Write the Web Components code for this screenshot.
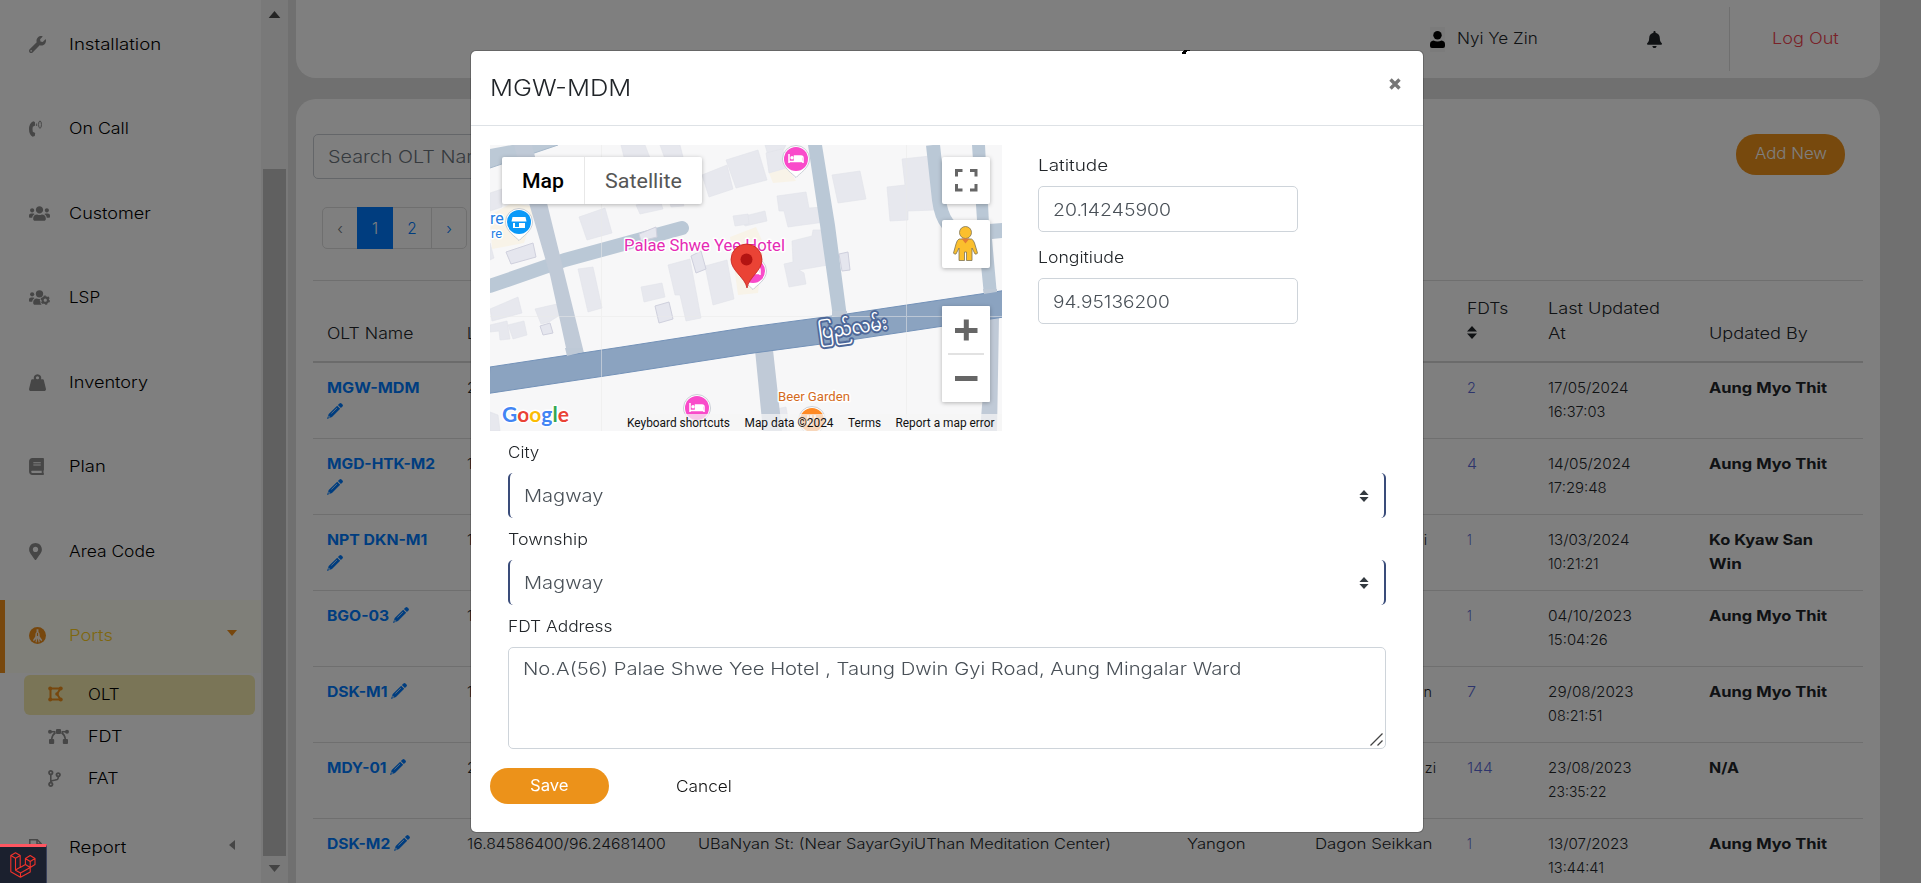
<!DOCTYPE html>
<html lang="en">
<head>
<meta charset="utf-8">
<title>OLT</title>
<style>
body{margin:0;height:883px;overflow:hidden;background:#e1e1e1;color:#212529;font-family:Inter,"Noto Sans",sans-serif;font-size:15.4px;font-weight:300}
</style>
</head>
<body>
<olt-page></olt-page>
<script>
const icons={
wrench:['0 0 512 512','<path d="M507.73 109.1c-2.24-9.03-13.54-12.09-20.12-5.51l-74.36 74.36-67.88-11.31-11.31-67.88 74.36-74.36c6.62-6.62 3.43-17.9-5.66-20.16-47.38-11.74-99.55.91-136.58 37.93-39.64 39.64-50.55 97.1-34.05 147.2L18.74 402.76c-24.99 24.99-24.99 65.51 0 90.5 24.99 24.99 65.51 24.99 90.5 0l213.21-213.21c50.12 16.71 107.47 5.68 147.37-34.22 37.07-37.07 49.7-89.32 37.91-136.73zM64 472c-13.25 0-24-10.75-24-24 0-13.26 10.75-24 24-24s24 10.74 24 24c0 13.25-10.75 24-24 24z"/>'],
call:['0 0 13 17','<path d="M4.2 1.2Q0 3.500 0 9t3.600 7.700l2.200-.7.400-3-2.400-1.300Q3.200 9 3.800 6.700l2.400-1.200-.3-3.600z"/><g fill="none" stroke="currentColor"><path d="M7.700 3.500v2.500"/><ellipse cx="11" cy="4.600" rx="1.400" ry="3.700"/></g>'],
users:['0 0 640 512','<path d="M96 224c35.3 0 64-28.7 64-64s-28.7-64-64-64-64 28.7-64 64 28.7 64 64 64zm448 0c35.3 0 64-28.7 64-64s-28.7-64-64-64-64 28.7-64 64 28.7 64 64 64zm32 32h-64c-17.6 0-33.5 7.1-45.1 18.6 40.3 22.1 68.9 62 75.1 109.4h66c17.7 0 32-14.3 32-32v-32c0-35.3-28.7-64-64-64zm-256 0c61.9 0 112-50.1 112-112S381.9 32 320 32 208 82.1 208 144s50.1 112 112 112zm76.8 32h-8.3c-20.8 10-43.9 16-68.5 16s-47.6-6-68.5-16h-8.3C179.6 288 128 339.6 128 403.2V432c0 26.5 21.5 48 48 48h288c26.5 0 48-21.5 48-48v-28.8c0-63.6-51.6-115.2-115.2-115.2zm-223.7-13.4C161.5 263.1 145.600 256 128 256H64c-35.3 0-64 28.7-64 64v32c0 17.7 14.3 32 32 32h65.900c6.3-47.4 34.9-87.3 75.2-109.400z"/>'],
userscog:['0 0 640 512','<circle cx="96" cy="160" r="64"/><circle cx="320" cy="144" r="112"/><path d="M173 274.600C161.500 263 145.600 256 128 256H64c-35 0-64 29-64 64v32c0 18 14 32 32 32h66c6-47 35-87 75-109.400zM232 288c-60 4-104 54-104 115v29c0 26 21 48 48 48h215c-30-16-50-60-40-100-30-30-30-60 0-86-38 14-80 10-119-6z"/><circle cx="496" cy="336" r="82" fill="none" stroke="currentColor" stroke-width="66"/><circle cx="496" cy="336" r="122" fill="none" stroke="currentColor" stroke-width="44" stroke-dasharray="64 63.750"/>'],
weight:['0 0 512 512','<path fill-rule="evenodd" d="M510 446L445 184c-3-14-15-24-29-24h-56a112 112 0 1 0-208 0H96c-14 0-26 10-29 24L2 446c-8 33 17 66 52 66h404c35 0 60-33 52-66zM256 160a48 48 0 1 1 0-96 48 48 0 0 1 0 96z"/>'],
book:['0 0 448 512','<path d="M448 360V24c0-13.300-10.700-24-24-24H96C43 0 0 43 0 96v320c0 53 43 96 96 96h328c13.300 0 24-10.700 24-24v-16c0-7.500-3.500-14.300-8.900-18.700-4.200-15.400-4.200-59.300 0-74.700 5.400-4.300 8.900-11.100 8.900-18.600zM128 134c0-3.300 2.700-6 6-6h212c3.300 0 6 2.700 6 6v20c0 3.300-2.700 6-6 6H134c-3.300 0-6-2.700-6-6v-20zm0 64c0-3.300 2.700-6 6-6h212c3.300 0 6 2.700 6 6v20c0 3.300-2.700 6-6 6H134c-3.300 0-6-2.700-6-6v-20zm253.400 250H96c-17.700 0-32-14.300-32-32 0-17.600 14.400-32 32-32h285.400c-1.900 17.100-1.900 46.900 0 64z"/>'],
pin:['0 0 384 512','<path d="M172.268 501.670C26.970 291.031 0 269.413 0 192 0 85.961 85.961 0 192 0s192 85.961 192 192c0 77.413-26.970 99.031-172.268 309.670-9.535 13.774-29.930 13.773-39.464 0zM192 272c44.183 0 80-35.817 80-80s-35.817-80-80-80-80 35.817-80 80 35.817 80 80 80z"/>'],
ports:['0 0 16 16','<circle cx="8" cy="8" r="8"/><path d="M7.100 2.200h1.800v2.600l1 1.200.2 3 2.300 3.200-.6 1.200-2.300-2.200.6 3-1 .5-1-4.200-1 4.200-1-.5.6-3-2.300 2.200-.6-1.200L5.900 9l.2-3 1-1.200z" fill="#fff" fill-opacity=".85"/><path d="M8 5.500v3" stroke="currentColor" stroke-width="1.100"/>'],
polygon:['0 0 15 16','<g fill="none" stroke="currentColor" stroke-width="2"><path d="M2.500 2.600h10L9 8l3.500 5.500h-10z"/></g><circle cx="2.200" cy="2.500" r="2"/><circle cx="12.700" cy="2.500" r="2"/><circle cx="9" cy="8" r="1.800"/><circle cx="2.200" cy="13.500" r="2"/><circle cx="12.700" cy="13.500" r="2"/>'],
bezier:['0 0 21 17','<circle cx="2" cy="3.700" r="2"/><circle cx="19" cy="3.700" r="2"/><rect x="8" y="1" width="5" height="5" rx="1"/><rect x="1" y="11" width="5.200" height="5" rx="1"/><rect x="14.800" y="11" width="5.200" height="5" rx="1"/><g fill="none" stroke="currentColor" stroke-width="1.600"><path d="M3 3.700h4.500M13.500 3.700h5M7.500 4.500Q4.200 7 3.700 11M13.500 4.500Q16.800 7 17.300 11"/></g>'],
branch:['0 0 384 512','<path d="M384 144c0-44.200-35.800-80-80-80s-80 35.800-80 80c0 36.400 24.300 67.100 57.500 76.800-.6 16.100-4.200 28.500-11 36.900-15.400 19.200-49.300 22.400-85.200 25.700-28.200 2.600-57.400 5.400-81.300 16.900v-144c32.500-10.200 56-40.500 56-76.300 0-44.200-35.800-80-80-80S0 35.800 0 80c0 35.800 23.500 66.100 56 76.300v199.300C23.500 365.900 0 396.200 0 432c0 44.200 35.800 80 80 80s80-35.800 80-80c0-34-21.200-63.100-51.200-74.600 3.100-5.200 7.800-9.800 14.900-13.400 16.200-8.200 40.400-10.400 66.100-12.800 42.200-3.900 90-8.400 118.200-43.400 14-17.400 21.100-39.800 21.600-67.900 31.600-10.800 54.400-40.700 54.400-75.900zM80 56a24 24 0 1 1 0 48 24 24 0 0 1 0-48zm0 400a24 24 0 1 1 0-48 24 24 0 0 1 0 48zm224-336a24 24 0 1 1 0 48 24 24 0 0 1 0-48z"/>'],
file:['0 0 13 17','<path fill="none" stroke="currentColor" stroke-width="1.500" d="M.8.8h7.500l4 4v11.400H.8zM8 1v4h4"/>'],
bell:['0 0 448 512','<path d="M224 512c35.320 0 63.970-28.650 63.970-64H160.030c0 35.350 28.650 64 63.970 64zm215.390-149.710c-19.320-20.760-55.470-51.990-55.470-154.290 0-77.700-54.480-139.900-127.940-155.160V32c0-17.670-14.320-32-31.980-32s-31.980 14.330-31.980 32v20.840C118.560 68.100 64.080 130.300 64.080 208c0 102.300-36.150 133.530-55.470 154.290-6 6.450-8.660 14.160-8.610 21.710.11 16.400 12.980 32 32.100 32h383.800c19.120 0 32-15.600 32.100-32 .05-7.550-2.610-15.270-8.610-21.710z"/>'],
user:['0 0 15 17','<circle cx="7.500" cy="4.200" r="4.200"/><path d="M3.500 9.600Q7.500 11.500 11.500 9.600 15 10 15 13.500V15q0 2-2 2H2q-2 0-2-2v-1.500Q0 10 3.500 9.600z"/>'],
pencil:['0 0 16 16','<path d="M10.900 2.100L12.500.500q1-.9 2 0l1 1q.9 1 0 2l-1.600 1.600zM10.200 2.800l3 3L5 14 0 16l1.700-5.100z"/><path d="M4.400 10.500l5.500-5.400" stroke="#fff" stroke-width=".7" fill="none"/><path d="M1.700 12.600l1.700 1.700-1.500.6-.8-.8z" fill="#fff" opacity=".7"/>'],
sort:['0 0 10 13','<path d="M0 5.500L5 0l5 5.500zM0 7.500h10L5 13z"/>'],
down:['0 0 10 6','<path d="M0 0h10L5 6z"/>'],up:['0 0 10 6','<path d="M0 6h10L5 0z"/>'],left:['0 0 6 10','<path d="M6 0v10L0 5z"/>']};

class UiIcon extends HTMLElement{
  connectedCallback(){
    const r=this.attachShadow({mode:'open'}),[box,body]=icons[this.getAttribute('name')];
    r.innerHTML=`<style>:host{display:inline-block;flex:none;width:${this.getAttribute('w')}px;height:${this.getAttribute('h')}px;line-height:0}svg{display:block;width:100%;height:100%}</style><svg viewBox="${box}" fill="currentColor">${body}</svg>`;
  }
}
/* A label that occupies an exact measure, widening its letters to fill it. */
class FitText extends HTMLElement{
  connectedCallback(){
    const r=this.attachShadow({mode:'open'}),w=+this.getAttribute('w');
    r.innerHTML=`<style>:host{display:inline-block;flex:none;width:${w}px;white-space:nowrap}span{display:inline-block;transform-origin:0 50%}</style><span><slot></slot></span>`;
    const s=r.querySelector('span');
    s.style.transform=`scaleX(${w/s.offsetWidth})`;
  }
}
const t=(s,w)=>`<fit-text w="${w}">${s}</fit-text>`;
const ic=(n,w,h)=>`<ui-icon name="${n}" w="${w}" h="${h}"></ui-icon>`;

class SideItem extends HTMLElement{
  connectedCallback(){
    const a=n=>this.getAttribute(n);
    this.attachShadow({mode:'open'}).innerHTML=`<style>
    :host{display:block;color:#000}
    .r{display:flex;align-items:center;height:73px;margin-bottom:11.570px;box-sizing:border-box;padding:0 0 1px 29px}
    .i{width:40px;display:flex;color:#8d8d8d}
    .c{margin-left:auto;padding-right:26px;display:flex;color:#8d8d8d;position:relative;top:-3px}
    :host([kind=open]) .r{background:#fffff3;border-left:5px solid #f0911a;padding-left:24px;margin-bottom:2px;color:#ffcf1f}
    :host([kind=open]) .c{padding-right:24px}
    :host([kind=open]) .i,:host([kind=open]) .c,:host([kind=sel]) .i{color:#ee8f1b}
    :host([kind=sub]) .r,:host([kind=sel]) .r{height:40px;margin:0 6px 2px 24px;padding-left:24px;border-radius:6px}
    :host([kind=sel]) .r{background:#f4ebae}
    </style><div class="r"><span class="i">${ic(a('icon'),a('iw'),a('ih')||17)}</span><slot></slot><span class="c">${a('caret')?ic(a('caret'),a('caret')=='down'?10:6,a('caret')=='down'?6:10):''}</span></div>`;
  }
}
class SideNav extends HTMLElement{
  connectedCallback(){
    const it=(n,w,i,iw,k='',c='',ih=17)=>`<side-item icon="${i}" iw="${iw}" ih="${ih}" kind="${k}" ${c&&`caret="${c}"`}>${t(n,w)}</side-item>`;
    this.attachShadow({mode:'open'}).innerHTML=`<style>
    :host{display:flex;width:288px;height:883px;background:#fff}
    nav{width:261px;padding-top:8px;box-sizing:border-box;height:883px;overflow:hidden}
    .g{height:11px}
    .sb{width:27px;height:883px;background:#f3f3f3;display:flex;flex-direction:column;align-items:center;color:#4a4a4a;box-sizing:border-box;padding:11px 0 11px}
    .th{flex:none;width:23px;height:687px;margin:151px 0 9px;background:#c0c0c0}
    .dn{color:#868686;display:flex}
    </style><nav>${it('Installation',92,'wrench',17)}${it('On Call',60,'call',13)}${it('Customer',82,'users',21)}${it('LSP',31,'userscog',21)}${it('Inventory',79,'weight',17)}${it('Plan',37,'book',15)}${it('Area Code',86,'pin',13)}${it('Ports',44,'ports',17,'open','down')}${it('OLT',32,'polygon',15,'sel','',16)}${it('FDT',34,'bezier',21,'sub')}${it('FAT',31,'branch',13,'sub')}<div class="g"></div>${it('Report',57,'file',13,'','left')}</nav>
    <div class="sb">${ic('up',13,7)}<div class="th"></div><span class="dn">${ic('down',13,7)}</span></div>`;
  }
}
class TopBar extends HTMLElement{
  connectedCallback(){
    this.attachShadow({mode:'open'}).innerHTML=`<style>
    :host{display:flex;height:78px;background:#fff;border-radius:0 0 20px 20px;box-sizing:border-box;justify-content:flex-end;align-items:center}
    fit-text{margin-top:-2px}
    .u{background:#f6f6f6;width:15px;height:25px;display:flex;align-items:center;color:#000;margin:0 12px 0 0}
    .bell{margin:0 67px 0 109px;display:flex}
    .out{border-left:1px solid #dedede;height:64px;display:flex;align-items:center;padding:0 41px 0 42px;color:#f24450}
    </style><span class="u">${ic('user',15,17)}</span>${t('Nyi Ye Zin',81)}<span class="bell">${ic('bell',15,17)}</span><span class="out">${t('Log Out',67)}</span>`;
  }
}
class OltTable extends HTMLElement{
  connectedCallback(){
    const rows=[
    [['MGW-MDM',92,1],'2','','','','',['2',9],['17/05/2024',81,'16:37:03',57],['Aung Myo Thit',118]],
    [['MGD-HTK-M2',108,1],'1','','','','',['4',10],['14/05/2024',83,'17:29:48',59],['Aung Myo Thit',118]],
    [['NPT DKN-M1',100,1],'1','','','i',5,['1',5],['13/03/2024',81,'10:21:21',51],['Ko Kyaw San',104,'Win',33]],
    [['BGO-03',62],'1','','','','',['1',5],['04/10/2023',84,'15:04:26',60],['Aung Myo Thit',118]],
    [['DSK-M1',60],'1','','','n',0,['7',9],['29/08/2023',85,'08:21:51',55],['Aung Myo Thit',118]],
    [['MDY-01',59],'2','','','zi',-4,['144',26],['23/08/2023',84,'23:35:22',59],['N/A',30]],
    [['DSK-M2',63],t('16.84586400/96.24681400',199),t('UBaNyan St: (Near SayarGyiUThan Meditation Center)',413),t('Yangon',59),t('Dagon Seikkan',117),null,['1',5],['13/07/2023',80,'13:44:41',56],['Aung Myo Thit',118]]];
    const two=a=>t(a[0],a[1])+(a[2]?'<br>'+t(a[2],a[3]):'');
    this.attachShadow({mode:'open'}).innerHTML=`<style>
    :host{display:block;margin-top:31px;border-top:1px solid #dedede}
    .r{display:grid;grid-template-columns:140px 231px 489px 128px 152px 81px 161px 168px;height:76px;box-sizing:border-box;border-bottom:1px solid #dedede;padding:13px 0 0 14px;font-size:14.400px;line-height:24px}
    .h{height:81.500px;border-bottom:2px solid #d6d6d6;line-height:25px;font-size:15.400px;align-items:end;padding:0 0 15px 14px}
    .r>div{white-space:nowrap}
    .n{color:#007bff;font-weight:700;line-height:24px}
    .n ui-icon{vertical-align:-2px;margin-left:4px}
    .n br+ui-icon{margin-left:0}
    .f{color:#5c6bd8}.b{font-weight:700}
    .cut{text-align:right}
    </style><div class="r h"><div>${t('OLT Name',87)}</div><div>L</div><div></div><div></div><div></div><div>${t('FDTs',41)}<br>${ic('sort',10,13)}</div><div>${t('Last Updated',112)}<br>${t('At',18)}</div><div>${t('Updated By',99)}</div></div>`+
    rows.map(r=>`<div class="r"><div class="n">${t(r[0][0],r[0][1])}${r[0][2]?'<br>':''}${ic('pencil',16,16)}</div><div>${r[1]}</div><div>${r[2]}</div><div>${r[3]}</div><div ${r[5]!==null?`class="cut" style="padding-right:${35+(+r[5]||0)}px"`:''}>${r[4]}</div><div class="f">${two(r[6])}</div><div>${two(r[7])}</div><div class="b">${two(r[8])}</div></div>`).join('');
  }
}
class ListCard extends HTMLElement{
  connectedCallback(){
    this.attachShadow({mode:'open'}).innerHTML=`<style>
    :host{display:block;margin-top:21px;height:800px;background:#fff;border-radius:20px 20px 0 0;padding:35px 17px 0;box-sizing:border-box}
    .t{display:flex;justify-content:space-between;padding-right:18px}
    .s{width:400px;height:45px;border:1px solid #c9cdd2;border-radius:5px;box-sizing:border-box;padding-left:14px;display:flex;align-items:center;color:#6c757d;font-size:17.300px}
    .add{width:109px;height:41px;border-radius:20px;background:#ee921b;color:#fff;display:flex;align-items:center;justify-content:center;padding-bottom:2px;box-sizing:border-box}
    .p{display:inline-flex;height:42px;box-sizing:border-box;border:1px solid #dedede;border-radius:5px;margin:28px 0 0 9px;color:#007bff}
    .p span{display:flex;align-items:center;justify-content:center;width:34px}
    .p .a{background:#007bff;color:#fff;width:36px;margin:-1px 0}
    .p .n{width:39px;border-right:1px solid #dedede;box-sizing:border-box}
    </style><div class="t"><div class="s">${t('Search OLT Name',167)}</div><div class="add">${t('Add New',72)}</div></div>
    <div class="p"><span style="color:#6c757d">‹</span><span class="a">1</span><span class="n">2</span><span>›</span></div><olt-table></olt-table>`;
  }
}

class SiteMap extends HTMLElement{
  connectedCallback(){
    const b=(...p)=>p.map(q=>`<polygon points="${q}"/>`).join('');
    const poi=(x,y,c,g)=>`<g transform="translate(${x} ${y})"><path d="M0 18.500C-3 15-13.500 9-13.500 0a13.500 13.500 0 0 1 27 0C13.500 9 3 15 0 18.500z" fill="#fff" stroke="#b5bcc6" stroke-width=".7"/><circle r="12" fill="${c}"/>${g}</g>`;
    const bed='<path d="M-7-5v9M-7 2.500H7V4M-1.500 2V-3H5q2 0 2 2v3" fill="none" stroke="#fff" stroke-width="1.500"/><rect x="-1" y="-3" width="7" height="5" fill="#fff"/><circle cx="-4" cy="-1.300" r="1.700" fill="#fff"/>';
    this.attachShadow({mode:'open'}).innerHTML=`<style>
    :host{display:block;width:512px;height:286px;flex:none;overflow:hidden}
    svg{display:block;font-family:Roboto,"Noto Sans Myanmar",sans-serif;font-weight:400}
    .k rect{fill:#fff;filter:drop-shadow(0 1px 2px rgba(0,0,0,.28))}
    .halo{paint-order:stroke;stroke:#fff;stroke-width:3px;stroke-linejoin:round}
    </style><svg width="512" height="286" viewBox="0 0 512 286">
    <rect width="512" height="286" fill="#f7f7f8"/>
    <g fill="#f8f3e8">${b('0,70 22,58 46,62 34,98 2,104','279,28 298,23 306,36 283,38','240,92 266,82 274,100 268,148 248,150')}</g>
    <g fill="#e7e8ee" stroke="#e1e2ea" stroke-width=".6">
    ${b('131,0 155,0 165,26 138,28','170,0 190,0 196,24 180,28','89,72 115,63 122,88 97,95','212,30 237,20 243,44 219,52','236,15 268,5 277,35 246,43','275,0 296,0 290,12 279,14','276,8 292,4 300,22 279,28','342,30 370,26 376,54 348,58','397,42 415,40 412,14 440,11 445,65 418,66 418,75 400,76','287,51 316,47 319,63 333,62 335,77 298,82 294,66 289,66','251,72 275,66 277,76 255,81','302,96 322,91 323,85 332,85 338,120 309,125 314,128 316,139 299,142 294,119 303,117','178,120 200,114 211,173 196,176 190,150 185,150','215,121 237,115 244,154 223,160','151,142 172,138 175,152 154,157','88,124 103,122 112,163 98,167','0,164 28,152 32,168 2,176','0,180 17,176 20,194 10,195 9,186 0,187','18,180 34,176 37,190 23,194','45,164 58,161 67,159 70,170 59,177 51,179','0,48 12,44 12,62 0,66','146,60 170,55 173,64 150,69','180,58 192,55 194,61 181,62','243,71 258,69 259,79 245,81','0,98 4,113 0,115','280,265 296,262 300,286 283,286','0,267 8,270 10,286 0,286')}
    </g>
    <path d="M0 141L75 115L192 83" fill="none" stroke="#bac8d6" stroke-width="14" stroke-linecap="round"/>
    <g fill="#e5e6ee" stroke="#cfd0dd">${b('16,107 43,98 46,112 21,119','201,111 211,106 216,124 206,128','149,89 166,82 167,92 151,96','165,161 179,157 183,174 169,178','50,181 60,178 63,188 53,190','349,109 358,107 360,125 352,126')}</g>
    <path d="M0 4L22 0H68L0 23z" fill="#bcc9d6"/><path d="M0 23L68 0" stroke="#a6b8ca" fill="none"/>
    <path d="M24 0H42L57 58L94 208L78 212L60 130L39 58z" fill="#c0cad7"/>
    <path d="M318 0H332L345 80L357 172H343L330 80z" fill="#bac8d6"/>
    <path d="M443 0L449 55Q453 86 475 88" fill="none" stroke="#bac8d6" stroke-width="14"/><path d="M482 0H495L499 79L512 78V93L502 94L507 150H494L488 90z" fill="#bac8d6"/>
    <path d="M265 205H283L292 286H273zM499 172H509L507 286H490z" fill="#c0cad7"/>
    <path d="M0 222Q130 202.500 260 182L350 170L514 145.500V172L350 196.500L260 208.500Q130 229 -2 248.500z" fill="#8ba3c0" stroke="#7492b8"/>
    <path d="M77 211L93 207L92 203H75zM342 172L357 170V166H342zM494 149L507 147V144H493z" fill="#bec9d6"/>
    <g stroke="#fff" opacity=".3"><path d="M111.500 0V286M416.500 0V286M0 171.500H512"/></g>
    <g opacity=".3" stroke="#dcdcdc"><path d="M111.500 0V286M416.500 0V286M0 171.500H512"/></g>
    <text transform="translate(329 194) rotate(-8)" font-size="19" textLength="70" lengthAdjust="spacingAndGlyphs" fill="#fff" style="paint-order:stroke;stroke:#4d6798;stroke-width:4px;stroke-linejoin:round">ပြည်လမ်း</text>
    ${poi(29,77,'#0a99f8','<path d="M-6.500-5h13l1 4.500h-15zM-6 1h2v4h4V1h6v5H-6z" fill="#fff"/>')}
    ${poi(306,14,'#f94bca',bed)}${poi(207,263,'#f94bca',bed)}${poi(263,126,'#f94bca',bed)}${poi(322,275,'#ff8a24','<path d="M-4-5v10M-1-5v10M3-5v10" stroke="#fff" stroke-width="1.500"/>')}
    <g class="halo"><text x="0" y="78.500" font-size="16" fill="#257fe5">re</text><text x="1" y="92.500" font-size="13" fill="#257fe5">re</text>
    <text x="134" y="105.500" font-size="16.500" fill="#e52bb4" textLength="161" lengthAdjust="spacingAndGlyphs">Palae Shwe Yee Hotel</text>
    <text x="288" y="255.500" font-size="13" fill="#d46b1d" textLength="72" lengthAdjust="spacingAndGlyphs">Beer Garden</text></g>
    <path d="M257 143C255 132 241 126 241 114.500a15.500 15.500 0 0 1 31 0C272 126 259 132 257 143z" fill="#ea4335" stroke="#c5221f" stroke-width=".8"/><circle cx="256.500" cy="114.500" r="6" fill="#b31412"/>
    <rect x="135" y="269" width="377" height="17" fill="#f5f5f5" opacity=".72"/>
    <g font-size="12" fill="#111"><text x="137" y="281.500" textLength="103" lengthAdjust="spacingAndGlyphs">Keyboard shortcuts</text><text x="254.500" y="281.500" textLength="89" lengthAdjust="spacingAndGlyphs">Map data ©2024</text><text x="358" y="281.500" textLength="33" lengthAdjust="spacingAndGlyphs">Terms</text><text x="405.500" y="281.500" textLength="99" lengthAdjust="spacingAndGlyphs">Report a map error</text></g>
    <text class="halo" x="12" y="277" font-family="Lato" font-weight="700" font-size="21.500" textLength="67" lengthAdjust="spacingAndGlyphs"><tspan fill="#4285f4">G</tspan><tspan fill="#ea4335">o</tspan><tspan fill="#fbbc04">o</tspan><tspan fill="#4285f4">g</tspan><tspan fill="#34a853">l</tspan><tspan fill="#ea4335">e</tspan></text>
    <g class="k"><rect x="12" y="12" width="200" height="47" rx="2"/><rect x="452" y="12" width="48" height="47" rx="2"/><rect x="452" y="75" width="48" height="48" rx="2"/><rect x="452" y="161" width="48" height="96" rx="1"/></g>
    <path d="M94.500 12v47" stroke="#e8e8e8"/><g font-size="21"><text x="32" y="43" font-weight="500" textLength="42" lengthAdjust="spacingAndGlyphs">Map</text><text x="115" y="43" fill="#565656" textLength="77" lengthAdjust="spacingAndGlyphs">Satellite</text></g>
    <g fill="none" stroke="#666" stroke-width="3"><path d="M466.500 31.500v-6h6M480 25.500h6v6M486 39v6h-6M472.500 45h-6v-6"/><path stroke-width="5" d="M465 185.500h22.500M476.300 174.500v21M465 233.500h22.500"/></g><path d="M458 209h36" stroke="#e2e2e2" stroke-width="2"/>
    <g fill="#fbbf2d" stroke="#7d7455" stroke-width=".8"><path d="M469 94q-2 1-3 5l-2.500 9q.5 1.500 2.500 1l3-6v12.500h5.500V107h2v8.500h5.500V103l3 6q2 .5 2.500-1L484.500 98q-1-3-3-4z"/><circle cx="475.500" cy="87.500" r="6"/></g><path d="M471.500 93.500h8l-4 5z" fill="#e27c34"/>
    </svg>`;
  }
}
class FormField extends HTMLElement{
  connectedCallback(){
    const k=this.getAttribute('kind')||'input';
    this.attachShadow({mode:'open'}).innerHTML=`<style>
    :host{display:block}
    .l{height:24px;line-height:24px;margin-bottom:8px}
    .b{box-sizing:border-box;display:flex;align-items:center;color:#495057;font-size:17.300px;border-radius:5px;height:46px}
    .input{width:260px;border:1px solid #ced4da;padding-left:14px}
    .select{border-left:2px solid #3a4c7a;border-right:2px solid #3a4c7a;padding:0 15px 0 14px;height:45px;justify-content:space-between}
    .select fit-text{margin-top:-3px}
    .area{border:1px solid #ced4da;height:102px;align-items:flex-start;padding:10px 2px 2px 14px;justify-content:space-between}
    .area svg{align-self:flex-end}
    ui-icon{color:#343a40}
    </style><div class="l"><slot name="label"></slot></div><div class="b ${k}"><slot></slot>${k=='select'?ic('sort',10,12):k=='area'?'<svg width="13" height="13" fill="none" stroke="#444" stroke-width="1.300"><path d="M.5 12.500l12-12M7.500 12.500l5-5"/></svg>':''}</div>`;
  }
}
class EditDialog extends HTMLElement{
  connectedCallback(){
    const f=(l,lw,v,vw,k,s='')=>`<form-field kind="${k}" style="${s}"><span slot="label">${t(l,lw)}</span>${t(v,vw)}</form-field>`;
    this.attachShadow({mode:'open'}).innerHTML=`<style>
    :host{position:fixed;inset:0;background:rgba(0,0,0,.5);display:block}
    .m{margin:50px 0 0 470px;width:954px;height:783px;box-sizing:border-box;background:#fff;background-clip:padding-box;border:1px solid rgba(0,0,0,.2);border-radius:6px;position:relative}
    .h{height:75px;box-sizing:border-box;border-bottom:1px solid #dee2e6;display:flex;justify-content:space-between;align-items:center;padding:0 22px 0 19px;font-size:23px}
    .top{display:flex;padding:19px 0 0 19px}
    .side{padding:9px 0 0 36px}
    .low{padding:10px 37px 0}
    .btn{display:flex;align-items:center;padding:19px 0 0 19px;color:#111}
    .save{width:119px;height:36px;border-radius:18px;background:#ec921a;color:#fff;display:flex;align-items:center;justify-content:center;margin-right:67px;padding-bottom:2px;box-sizing:border-box;font-weight:400}
    .x{margin-top:-9px}
    .cursor{position:absolute;left:711px;top:-1px}
    </style><div class="m"><svg class="cursor" width="8" height="4" shape-rendering="crispEdges"><path d="M2 0h6v1H5v1H4v2H0V2h1V1h1z"/></svg>
    <div class="h">${t('MGW-MDM',141)}<svg class="x" width="12" height="12" stroke="#777" stroke-width="3.400"><path d="M1.500 1.500l9 9M10.500 1.500l-9 9"/></svg></div>
    <div class="top"><site-map></site-map><div class="side">${f('Latitude',70,'20.14245900',118,'input')}${f('Longitiude',86,'94.95136200',117,'input','margin-top:14px')}</div></div>
    <div class="low">${f('City',31,'Magway',79,'select')}${f('Township',80,'Magway',79,'select','margin-top:10px')}${f('FDT Address',105,'No.A(56) Palae Shwe Yee Hotel , Taung Dwin Gyi Road, Aung Mingalar Ward',718,'area','margin-top:10px')}</div>
    <div class="btn"><span class="save">${t('Save',39)}</span>${t('Cancel',56)}</div></div>`;
  }
}
class DebugTab extends HTMLElement{
  connectedCallback(){
    this.attachShadow({mode:'open'}).innerHTML=`<style>:host{position:fixed;left:0;bottom:0;width:47px;height:39px;box-sizing:border-box;background:#1b202e;border-top:3px solid #ff5661;border-right:1px solid #38405a;display:flex;align-items:center;justify-content:center}</style>
    <svg width="26" height="26" viewBox="0 0 26 26" fill="none" stroke="#f0322b" stroke-width="1.100" stroke-linejoin="round"><path d="M.8 3.500L5.500.8l4.700 2.700v12l5.200-3V6.500L20.200 3.500 25 6.500v6l-4.800 3v4.500l-9.700 5.200-9.700-5.500zM.8 3.500L5.500 6.200l4.700-2.700M5.500 6.200v12l5 2.800v4M5.500 18l4.700-2.700M15.400 6.500l4.800 3 4.800-3M20.200 9.500v6M15.400 12.500l4.800 3-9.700 5.500"/></svg>`;
  }
}
class OltPage extends HTMLElement{
  connectedCallback(){
    this.attachShadow({mode:'open'}).innerHTML=`<style>:host{display:flex;height:883px;overflow:hidden}side-nav{flex:none}main{margin-left:8px;width:1584px}</style><side-nav></side-nav><main><top-bar></top-bar><list-card></list-card></main><edit-dialog></edit-dialog><debug-tab></debug-tab>`;
  }
}
for(const [n,c] of Object.entries({'ui-icon':UiIcon,'fit-text':FitText,'side-item':SideItem,'side-nav':SideNav,'top-bar':TopBar,'olt-table':OltTable,'list-card':ListCard,'site-map':SiteMap,'form-field':FormField,'edit-dialog':EditDialog,'debug-tab':DebugTab,'olt-page':OltPage}))customElements.define(n,c);
</script>
</body>
</html>
